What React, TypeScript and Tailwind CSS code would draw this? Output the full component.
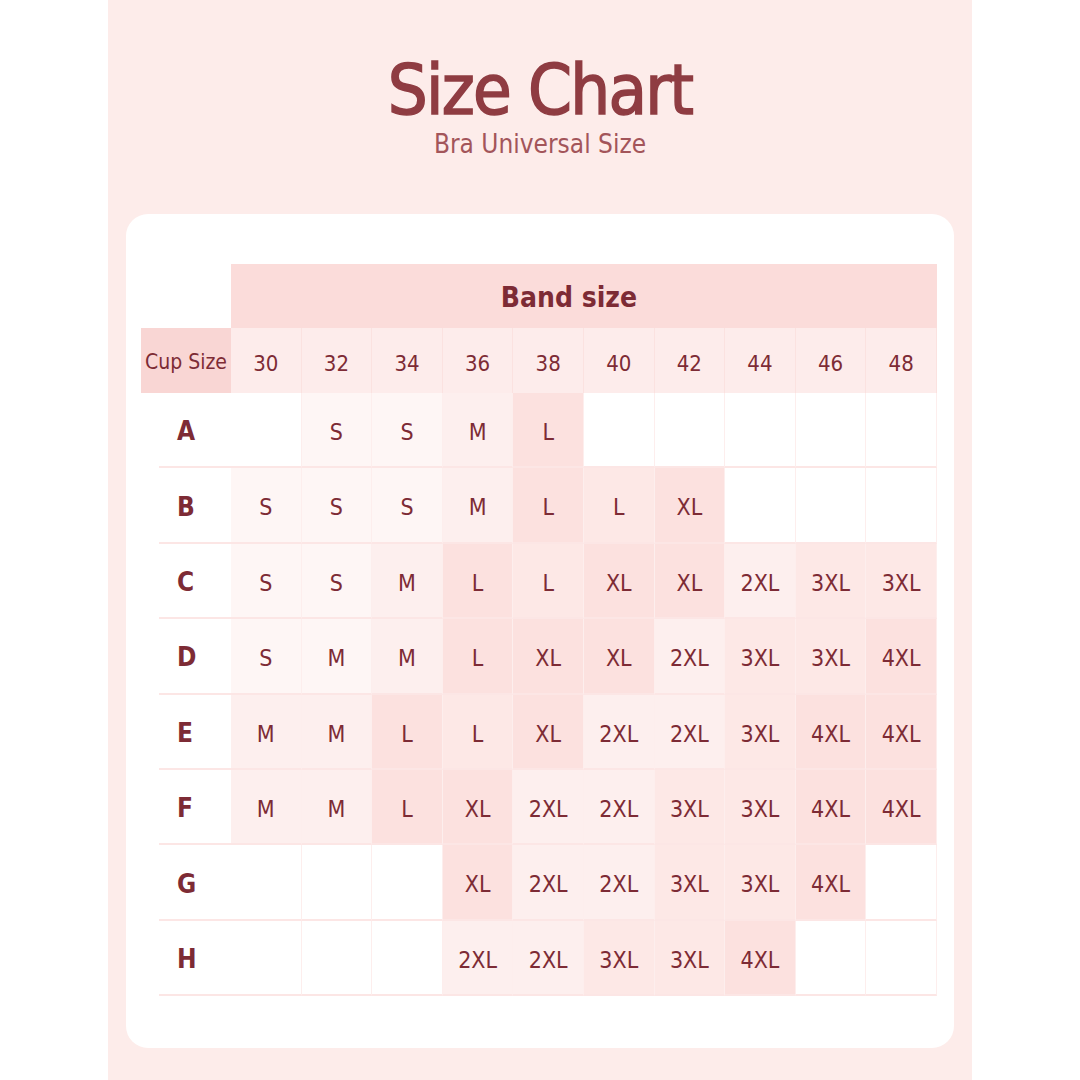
import React from 'react';

const bands = ['30', '32', '34', '36', '38', '40', '42', '44', '46', '48'];

// shade: 0 white, 1 very light, 2 light, 3 light-medium, 4 medium
type Cell = [string, number];

const rows: { cup: string; cells: Cell[] }[] = [
  { cup: 'A', cells: [['', 0], ['S', 1], ['S', 1], ['M', 2], ['L', 4], ['', 0], ['', 0], ['', 0], ['', 0], ['', 0]] },
  { cup: 'B', cells: [['S', 1], ['S', 1], ['S', 1], ['M', 2], ['L', 4], ['L', 3], ['XL', 4], ['', 0], ['', 0], ['', 0]] },
  { cup: 'C', cells: [['S', 1], ['S', 1], ['M', 2], ['L', 4], ['L', 3], ['XL', 4], ['XL', 4], ['2XL', 2], ['3XL', 3], ['3XL', 3]] },
  { cup: 'D', cells: [['S', 1], ['M', 1], ['M', 2], ['L', 4], ['XL', 4], ['XL', 4], ['2XL', 2], ['3XL', 3], ['3XL', 3], ['4XL', 4]] },
  { cup: 'E', cells: [['M', 2], ['M', 2], ['L', 4], ['L', 3], ['XL', 4], ['2XL', 2], ['2XL', 2], ['3XL', 3], ['4XL', 4], ['4XL', 4]] },
  { cup: 'F', cells: [['M', 2], ['M', 2], ['L', 4], ['XL', 4], ['2XL', 2], ['2XL', 2], ['3XL', 3], ['3XL', 3], ['4XL', 4], ['4XL', 4]] },
  { cup: 'G', cells: [['', 0], ['', 0], ['', 0], ['XL', 4], ['2XL', 2], ['2XL', 2], ['3XL', 3], ['3XL', 3], ['4XL', 4], ['', 0]] },
  { cup: 'H', cells: [['', 0], ['', 0], ['', 0], ['2XL', 2], ['2XL', 2], ['3XL', 3], ['3XL', 3], ['4XL', 4], ['', 0], ['', 0]] },
];

const shadeClass = ['bg-white', 'bg-[#fef6f5]', 'bg-[#fdefee]', 'bg-[#fde8e6]', 'bg-[#fce1df]'];

const font = { fontFamily: '"DejaVu Sans Condensed", "Liberation Sans Narrow", Roboto, sans-serif' };

export default function App() {
  return (
    <div className="w-[1080px] h-[1080px] bg-white flex justify-center" style={font}>
      <div className="w-[864px] h-full bg-[#fdecea] flex flex-col items-center">
        <h1 className="mt-[50px] text-[70px] leading-[80px] font-normal text-[#8f3c42] tracking-[-1.8px] [-webkit-text-stroke:1.5px_#8f3c42]">
          Size Chart
        </h1>
        <p className="mt-[0px] text-[26px] leading-[28px] text-[#a3555a]">Bra Universal Size</p>

        <div className="mt-[56px] w-[828px] h-[834px] bg-white rounded-[22px] pt-[50px] pl-[15px]">
          <div className="grid grid-cols-[90px_repeat(10,70.6px)] text-[#7d2b35]">
            <div className="h-[64px]" />
            <div className="col-span-10 h-[64px] bg-[#fbdcda] flex items-center justify-center pr-[30px] pt-[4px] text-[28px] font-bold">
              Band size
            </div>

            <div className="h-[65px] bg-[#f9d6d4] flex items-center justify-center pt-[4px] text-[21px]">Cup Size</div>
            {bands.map((b) => (
              <div
                key={b}
                className="h-[65px] bg-[#fdeceb] border-r border-[#fbe2e0] flex items-center justify-center pt-[5px] text-[22px]"
              >
                {b}
              </div>
            ))}

            {rows.map((r) => (
              <React.Fragment key={r.cup}>
                <div className="h-[75.4px] pl-[18px]">
                  <div className="h-full border-b-2 border-[#fce6e5] flex items-center pl-[18px] pt-[4px] text-[26px] font-bold">
                    {r.cup}
                  </div>
                </div>
                {r.cells.map(([v, s], i) => (
                  <div
                    key={i}
                    className={`h-[75.4px] border-b-2 border-r border-b-[#fce6e5] border-r-[#fdeeed] flex items-center justify-center pt-[5px] text-[23px] ${shadeClass[s]}`}
                  >
                    {v}
                  </div>
                ))}
              </React.Fragment>
            ))}
          </div>
        </div>
      </div>
    </div>
  );
}
